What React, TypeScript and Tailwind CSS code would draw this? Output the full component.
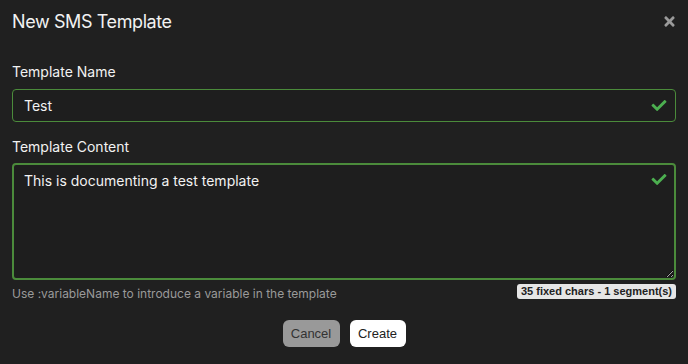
import React from 'react'
import { FaCheck, FaTimes } from 'react-icons/fa'

const App = () => {
    return (
        <div className="w-[688px] h-[364px] bg-[#202020] px-3 pt-[10px] font-['Inter',sans-serif] text-[#f2f2f2] overflow-hidden">
            <div className="flex items-start justify-between">
                <h1 className="text-[18px] leading-[24px] font-normal tracking-[-0.4px]">New SMS Template</h1>
                <button className="mt-[4px] text-[#9a9a9a]">
                    <FaTimes className="w-[13px] h-[15px]" />
                </button>
            </div>

            <label className="block mt-[29px] text-[14px] leading-[18px]">Template Name</label>
            <div className="relative mt-[8px]">
                <input
                    readOnly
                    value="Test"
                    className="w-full h-[33px] rounded-[4px] border border-[#4b8b3b] bg-[#1e1e1e] pl-[11px] pr-8 text-[14px] text-[#f2f2f2] outline-none font-['Inter',sans-serif]"
                />
                <FaCheck className="absolute right-[9px] top-[9px] w-[16px] h-[15px] text-[#4caf50]" />
            </div>

            <label className="block mt-[16px] text-[14px] leading-[18px]">Template Content</label>
            <div className="relative mt-[7px]">
                <textarea
                    readOnly
                    value="This is documenting a test template"
                    className="block w-full h-[117px] rounded-[4px] border-2 border-[#4b8b3b] bg-[#1e1e1e] pl-[10px] pt-[6px] pr-8 text-[14px] leading-[20px] text-[#f2f2f2] outline-none resize-y font-['Inter',sans-serif]"
                />
                <FaCheck className="absolute right-[9px] top-[9px] w-[16px] h-[15px] text-[#4caf50]" />
            </div>

            <div className="flex items-start justify-between mt-[4px]">
                <p className="text-[12px] leading-[16px] text-[#9a9a9a] mt-[2px]">
                    Use :variableName to introduce a variable in the template
                </p>
                <span className="rounded-[3px] bg-[#e6e6e6] px-[4px] text-[11px] leading-[15px] font-bold text-[#222] font-['Liberation_Sans',sans-serif]">
                    35 fixed chars - 1 segment(s)
                </span>
            </div>

            <div className="flex justify-center gap-[10px] mt-[18px]">
                <button className="h-[27px] w-[57px] rounded-[6px] bg-[#999999] text-[13px] text-[#333] font-['Liberation_Sans',sans-serif]">
                    Cancel
                </button>
                <button className="h-[27px] w-[56px] rounded-[6px] bg-white text-[13px] text-[#222] font-['Liberation_Sans',sans-serif]">
                    Create
                </button>
            </div>
        </div>
    )
}

export default App
